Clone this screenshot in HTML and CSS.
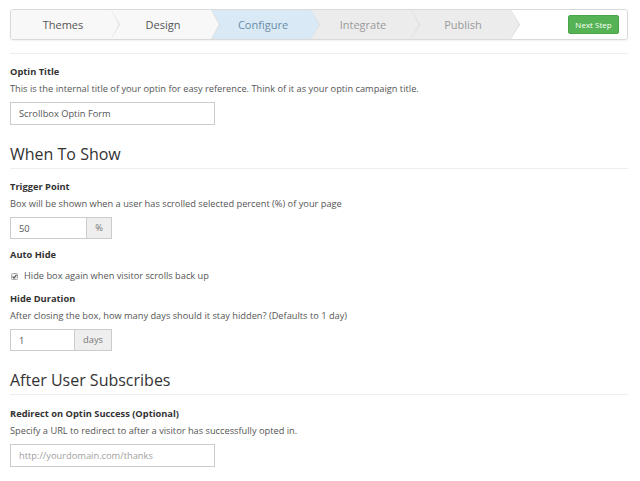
FILE: index.html
```html
<!DOCTYPE html>
<html lang="en">
  <head>
    <meta charset="UTF-8" />
    <meta name="viewport" content="width=device-width, initial-scale=1.0" />
    <title>Optin Settings</title>
    <link rel="stylesheet" href="styles.css">
  </head>
  <body>
    <div class="page">
      <div class="wizard">
        <div class="step done">Themes</div>
        <div class="step done">Design</div>
        <div class="step active">Configure</div>
        <div class="step todo">Integrate</div>
        <div class="step todo">Publish</div>
        <div class="wizard-actions">
          <button class="next-btn">Next Step</button>
        </div>
      </div>
      <div class="rule"></div>

      <div class="field first">
        <div class="label">Optin Title</div>
        <div class="desc">This is the internal title of your optin for easy reference. Think of it as your optin campaign title.</div>
        <input type="text" class="text-input" value="Scrollbox Optin Form" />
      </div>

      <h2>When To Show</h2>

      <div class="field first">
        <div class="label">Trigger Point</div>
        <div class="desc">Box will be shown when a user has scrolled selected percent (%) of your page</div>
        <div class="input-group">
          <input type="text" value="50" />
          <span class="addon">%</span>
        </div>
      </div>

      <div class="field">
        <div class="label">Auto Hide</div>
        <label class="check">
          <svg width="7" height="7" viewBox="0 0 7 7">
            <rect x="0.5" y="0.5" width="6" height="6" rx="1" fill="#eee" stroke="#aaa" />
            <path d="M1.6 3.6 L3 5 L5.5 1.8" fill="none" stroke="#555" stroke-width="1.2" />
          </svg>
          Hide box again when visitor scrolls back up
        </label>
      </div>

      <div class="field">
        <div class="label">Hide Duration</div>
        <div class="desc">After closing the box, how many days should it stay hidden? (Defaults to 1 day)</div>
        <div class="input-group">
          <input type="text" value="1" />
          <span class="addon">days</span>
        </div>
      </div>

      <h2>After User Subscribes</h2>

      <div class="field first redirect">
        <div class="label">Redirect on Optin Success (Optional)</div>
        <div class="desc">Specify a URL to redirect to after a visitor has successfully opted in.</div>
        <input type="text" class="text-input" placeholder="http://yourdomain.com/thanks" />
      </div>
    </div>
  </body>
</html>
```

FILE: styles.css
```css
body {
  font-family: "Open Sans", "Noto Sans", sans-serif;
  background: #fff;
  margin: 0;
  padding: 0;
  color: #555;
}
.page {
  padding: 9px 12px 0 10px;
}
.wizard {
  display: flex;
  height: 29px;
  border: 1px solid #d9d9d9;
  border-radius: 3px;
  box-shadow: 0 1px 2px rgba(0, 0, 0, 0.06);
  overflow: hidden;
}
.step {
  position: relative;
  width: 96px;
  padding-left: 4px;
  line-height: 29px;
  font-size: 11px;
  text-align: center;
}
.step::before,
.step::after {
  content: "";
  position: absolute;
  top: 0;
  height: 100%;
  clip-path: polygon(0 0, 100% 50%, 0 100%);
  z-index: 1;
}
.step::before {
  right: -9px;
  width: 9px;
  background: #d6d6d6;
}
.step::after {
  right: -8px;
  width: 8px;
}
.done {
  background: #f8f8f8;
  color: #555;
}
.done::after {
  background: #f8f8f8;
}
.active {
  background: #d9eaf6;
  color: #6b8ba6;
}
.active::before {
  background: #dcdcdc;
}
.active::after {
  background: #d9eaf6;
}
.todo {
  background: #ececec;
  color: #9a9a9a;
}
.todo::after {
  background: #ececec;
}
.wizard-actions {
  flex: 1;
  display: flex;
  justify-content: flex-end;
  align-items: center;
  padding-right: 8px;
  background: #fff;
}
.next-btn {
  height: 19px;
  width: 51px;
  padding: 0;
  font-family: inherit;
  font-size: 8px;
  color: #fff;
  background: #55b255;
  border: 1px solid #4ba54b;
  border-radius: 2px;
}
.rule {
  height: 1px;
  margin-top: 13px;
  background: #eee;
}
.field {
  margin-top: 9px;
}
.field.first {
  margin-top: 11px;
}
.field.redirect {
  margin-top: 12px;
}
.label {
  font-size: 9.3px;
  font-weight: bold;
  line-height: 14px;
  color: #333;
}
.desc {
  margin-top: 3px;
  font-size: 9.25px;
  line-height: 14px;
  color: #555;
}
.text-input {
  display: block;
  box-sizing: border-box;
  width: 205px;
  height: 23px;
  margin: 6px 0 0;
  padding: 0 8px;
  font-family: inherit;
  font-size: 9.3px;
  color: #555;
  border: 1px solid #ccc;
  border-radius: 0;
  outline: none;
}
.text-input::placeholder {
  color: #a0a0a0;
}
h2 {
  margin: 17px 0 0;
  padding-bottom: 2px;
  font-size: 16px;
  font-weight: normal;
  line-height: 24px;
  color: #333;
  border-bottom: 1px solid #eee;
}
.input-group {
  display: flex;
  width: 102px;
  height: 22px;
  margin-top: 6px;
  box-sizing: border-box;
  border: 1px solid #ccc;
}
.input-group input {
  flex: 1;
  min-width: 0;
  padding: 0 8px;
  font-family: inherit;
  font-size: 9.3px;
  color: #555;
  border: none;
  outline: none;
}
.addon {
  padding: 0 8px;
  font-size: 9.3px;
  line-height: 20px;
  color: #777;
  background: #eee;
  border-left: 1px solid #ccc;
}
.check {
  display: flex;
  align-items: center;
  gap: 6px;
  margin-top: 7px;
  font-size: 9.25px;
  line-height: 14px;
  color: #555;
}
.check svg {
  margin-left: 1px;
}
```
